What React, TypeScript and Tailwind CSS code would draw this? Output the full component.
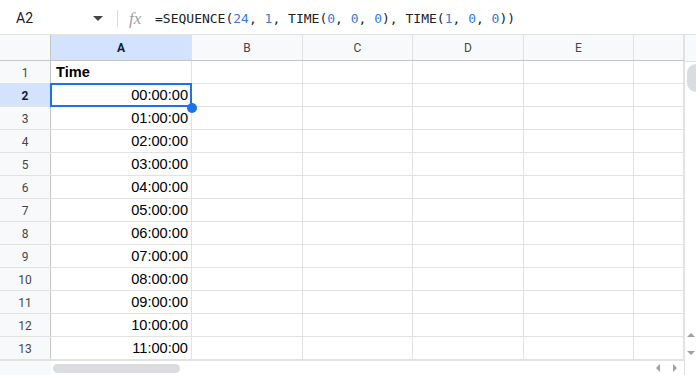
import React from 'react';

const cols = [
  { label: 'A', w: 'w-[141px]' },
  { label: 'B', w: 'w-[111px]' },
  { label: 'C', w: 'w-[110px]' },
  { label: 'D', w: 'w-[111px]' },
  { label: 'E', w: 'w-[110px]' },
  { label: '', w: 'flex-1' },
];

const times = Array.from({ length: 12 }, (_, i) => `${String(i).padStart(2, '0')}:00:00`);

function Num({ children }: { children: React.ReactNode }) {
  return <span className="text-[#3c78d8]">{children}</span>;
}

export default function App() {
  return (
    <div className="w-[696px] h-[375px] overflow-hidden bg-white font-['Roboto',sans-serif] text-[#202124] flex flex-col">
      {/* Formula bar */}
      <div className="h-[35px] flex items-center pt-[3px] border-b border-[#e1e3e1] shrink-0">
        <div className="w-[117px] flex items-center pl-[16px] pr-[14px]">
          <span className="text-[14px] flex-1">A2</span>
          <svg width="10" height="6" viewBox="0 0 10 6" className="mt-[1px]">
            <path d="M0 0 L10 0 L5 5 Z" fill="#444746" />
          </svg>
        </div>
        <div className="w-px h-[17px] bg-[#dadce0]" />
        <span className="ml-[11px] w-[18px] text-[17px] italic text-[#9aa0a6] font-['Liberation_Serif',serif] leading-none">fx</span>
        <span className="ml-[8px] text-[13px] font-['DejaVu_Sans_Mono',monospace] whitespace-nowrap">
          =SEQUENCE(<Num>24</Num>, <Num>1</Num>, TIME(<Num>0</Num>, <Num>0</Num>, <Num>0</Num>), TIME(<Num>1</Num>, <Num>0</Num>, <Num>0</Num>))
        </span>
      </div>

      {/* Grid + vertical scrollbar */}
      <div className="flex flex-1 min-h-0">
        <div className="flex-1 flex flex-col min-w-0">
          {/* Column headers */}
          <div className="flex h-[26px] shrink-0 border-b border-[#c4c7c5] bg-[#f8f9fa] text-[12px] text-[#444746]">
            <div className="w-[51px] border-r border-[#c4c7c5]" />
            {cols.map((c, i) => (
              <div
                key={i}
                className={`${c.w} flex items-center justify-center border-r border-[#e1e3e1] ${i === 0 ? 'bg-[#d3e3fd] font-bold text-[#0b1c3a]' : ''}`}
              >
                {c.label}
              </div>
            ))}
          </div>

          {/* Rows */}
          {Array.from({ length: 13 }, (_, r) => {
            const row = r + 1;
            const selected = row === 2;
            return (
              <div key={row} className={`flex h-[23px] shrink-0 border-b border-[#e1e3e1] ${selected ? 'relative z-10' : ''}`}>
                <div
                  className={`w-[51px] flex items-center justify-center pt-[1px] border-r border-[#c4c7c5] text-[12px] ${selected ? 'bg-[#d3e3fd] font-bold text-[#0b1c3a]' : 'bg-[#f8f9fa] text-[#444746]'}`}
                >
                  {row}
                </div>
                {cols.map((c, i) => (
                  <div key={i} className={`${c.w} relative border-r border-[#e1e3e1] flex items-center pt-[2px] font-['Liberation_Sans',sans-serif] text-[14.6px] text-black`}>
                    {i === 0 && row === 1 && <span className="pl-[5px] font-bold">Time</span>}
                    {i === 0 && row > 1 && <span className="ml-auto pr-[3px]">{times[row - 2]}</span>}
                    {i === 0 && selected && (
                      <>
                        <div className="absolute z-10 -left-px -top-px -right-px -bottom-px border-2 border-[#1a73e8]" />
                        <div className="absolute z-20 right-[-6px] bottom-[-7px] w-[10px] h-[10px] rounded-full bg-[#1a73e8]" />
                      </>
                    )}
                  </div>
                ))}
              </div>
            );
          })}

          {/* Horizontal scrollbar */}
          <div className="flex flex-1 border-t border-[#e1e3e1] bg-[#f8f9fa]">
            <div className="w-[51px]" />
            <div className="flex-1 bg-white flex items-center">
              <div className="ml-[2px] w-[127px] h-[9px] rounded-full bg-[#dadce0]" />
              <div className="ml-auto flex items-center gap-[11px] pr-[6px]">
                <svg width="6" height="8" viewBox="0 0 6 8"><path d="M5 0 L5 8 L1 4 Z" fill="#9aa0a6" /></svg>
                <svg width="6" height="8" viewBox="0 0 6 8"><path d="M1 0 L1 8 L5 4 Z" fill="#9aa0a6" /></svg>
              </div>
            </div>
          </div>
        </div>

        {/* Vertical scrollbar */}
        <div className="w-[12px] flex flex-col border-l border-[#e1e3e1] bg-[#f8f9fa]">
          <div className="h-[27px] border-b border-[#e1e3e1]" />
          <div className="flex-1 bg-white flex flex-col items-end">
            <div className="mt-[2px] w-[9px] h-[28px] rounded-l-full bg-[#dadce0]" />
            <div className="mt-auto flex flex-col items-center self-center gap-[12px] mb-[19px]">
              <svg width="8" height="6" viewBox="0 0 8 6"><path d="M0 5 L8 5 L4 1 Z" fill="#9aa0a6" /></svg>
              <svg width="8" height="6" viewBox="0 0 8 6"><path d="M0 1 L8 1 L4 5 Z" fill="#9aa0a6" /></svg>
            </div>
          </div>
        </div>
      </div>
    </div>
  );
}
